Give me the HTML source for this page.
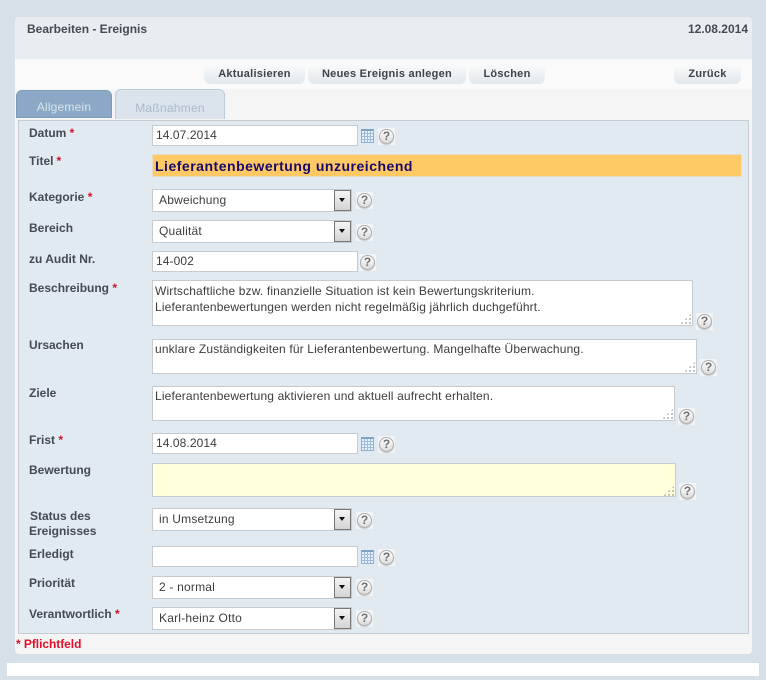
<!DOCTYPE html>
<html><head><meta charset="utf-8"><style>
html,body{margin:0;padding:0}
body{width:766px;height:680px;background:#d5e0e8;position:relative;overflow:hidden;font-family:"Liberation Sans",sans-serif;font-size:12px;color:#444}
div,span.a{position:absolute;box-sizing:border-box}
.l{left:29px;font-weight:bold;font-size:12px;line-height:14px;color:#454b52;white-space:nowrap}
.l b{color:#d2102a}
.i{left:152px;background:#fff;border:1px solid #c6cbd0;font-size:12px;letter-spacing:.08px;line-height:19px;padding-left:3px;color:#3c3c3c;white-space:nowrap}
.s{left:152px;width:200px;height:23px;background:#fff;border:1px solid #c6cbd0;font-size:12px;letter-spacing:.2px;line-height:21px;padding-left:6px;color:#3c3c3c}
.s i{position:absolute;box-sizing:border-box;right:0;top:0;width:17px;height:21px;background:linear-gradient(#f4f4f4,#d4d4d4);border:1px solid #777}
.s i:after{content:"";position:absolute;left:4px;top:7px;border:3.5px solid transparent;border-top:4px solid #111;border-bottom:0}
.h{width:17px;height:17px;background:#f2f5f8}
.h:after{content:"?";position:absolute;left:1px;top:1px;width:15px;height:15px;box-sizing:border-box;border:1px solid #adadad;border-radius:50%;background:linear-gradient(#fff,#dcdcdc);font:bold 12px/13px "Liberation Sans",sans-serif;color:#707070;text-align:center;box-shadow:0 1px 1px #c4c4c4}
.c{left:361px;width:13px;height:14px;background:repeating-linear-gradient(90deg,transparent 0 2px,#9dbcdb 2px 3px),repeating-linear-gradient(0deg,#e6eff7 0 2px,#9dbcdb 2px 3px);border:1px solid #8fb0d2;border-top:2px solid #7ea3c9}
.t{line-height:16px;padding:1px 2px;letter-spacing:.15px;white-space:pre;color:#3c3c3c}
.g{width:12px;height:11px;background-image:radial-gradient(circle,#bdbdbd 1px,transparent 1.2px);background-size:4px 4px;clip-path:polygon(100% 0,100% 100%,0 100%)}
.b{top:64px;height:20px;border-radius:6px;background:linear-gradient(#fafbfb,#e2e8ed);font-weight:bold;font-size:11px;letter-spacing:.27px;line-height:21px;text-align:center;color:#3f4448;white-space:nowrap}
</style></head><body>
<div style="left:15px;top:17px;width:737px;height:637px;background:#f5f5f5;border-radius:4px"></div>
<div style="left:15px;top:17px;width:737px;height:42px;background:#e8edf1;border-radius:4px 4px 0 0"></div>
<div style="left:15px;top:59px;width:737px;height:30px;background:#fafafa"></div>
<div style="left:27px;top:22px;font-weight:bold;line-height:14px;color:#444b52">Bearbeiten - Ereignis</div>
<div style="right:18px;top:22px;font-weight:bold;line-height:14px;color:#444b52">12.08.2014</div>
<div class="b" style="left:204px;width:101px">Aktualisieren</div>
<div class="b" style="left:308px;width:158px">Neues Ereignis anlegen</div>
<div class="b" style="left:469px;width:76px">Löschen</div>
<div class="b" style="left:674px;width:67px">Zurück</div>
<div style="left:16px;top:90px;width:96px;height:28px;background:#8ba9c6;border:1px solid #7d9cba;border-radius:6px 6px 0 0;color:#d8e3ec;text-align:center;line-height:33px;font-size:12px;letter-spacing:.2px">Allgemein</div>
<div style="left:115px;top:89px;width:110px;height:30px;background:#dbe4ec;border:1px solid #bcccda;border-bottom:0;border-radius:6px 6px 0 0;color:#a9b9c8;text-align:center;line-height:36px;font-size:12px;letter-spacing:.25px">Maßnahmen</div>
<div style="left:18px;top:120px;width:731px;height:514px;background:#e1e9f1;border:1px solid #c6ccd1"></div>

<div class="l" style="top:126px">Datum <b>*</b></div>
<div class="i" style="top:125px;width:206px;height:21px">14.07.2014</div>
<div class="c" style="top:129px"></div><div class="h" style="left:378px;top:128px"></div>

<div class="l" style="top:154px">Titel<b style="margin-left:3px">*</b></div>
<div style="left:152px;top:154px;width:590px;height:23px;background:#fec965;border:1px solid #e6dcc0;font-weight:bold;font-size:14px;letter-spacing:.51px;line-height:23px;padding-left:2px;color:#18086a">Lieferantenbewertung unzureichend</div>

<div class="l" style="top:190px">Kategorie <b>*</b></div>
<div class="s" style="top:189px">Abweichung<i></i></div><div class="h" style="left:356px;top:192px"></div>

<div class="l" style="top:221px">Bereich</div>
<div class="s" style="top:220px">Qualität<i></i></div><div class="h" style="left:356px;top:224px"></div>

<div class="l" style="top:252px">zu Audit Nr.</div>
<div class="i" style="top:251px;width:206px;height:21px">14-002</div><div class="h" style="left:359px;top:254px"></div>

<div class="l" style="top:281px">Beschreibung <b>*</b></div>
<div class="i t" style="top:280px;width:541px;height:46px;padding-top:2px">Wirtschaftliche bzw. finanzielle Situation ist kein Bewertungskriterium.
Lieferantenbewertungen werden nicht regelmäßig jährlich duchgeführt.</div>
<div class="g" style="left:680px;top:313px"></div><div class="h" style="left:696px;top:313px"></div>

<div class="l" style="top:338px">Ursachen</div>
<div class="i t" style="top:339px;width:545px;height:35px">unklare Zuständigkeiten für Lieferantenbewertung. Mangelhafte Überwachung.</div>
<div class="g" style="left:684px;top:361px"></div><div class="h" style="left:700px;top:359px"></div>

<div class="l" style="top:386px">Ziele</div>
<div class="i t" style="top:386px;width:523px;height:35px">Lieferantenbewertung aktivieren und aktuell aufrecht erhalten.</div>
<div class="g" style="left:662px;top:408px"></div><div class="h" style="left:678px;top:408px"></div>

<div class="l" style="top:433px">Frist <b>*</b></div>
<div class="i" style="top:433px;width:206px;height:21px">14.08.2014</div>
<div class="c" style="top:437px"></div><div class="h" style="left:378px;top:436px"></div>

<div class="l" style="top:463px">Bewertung</div>
<div class="i" style="top:463px;width:524px;height:34px;background:#ffffdc"></div>
<div class="g" style="left:663px;top:485px"></div><div class="h" style="left:679px;top:483px"></div>

<div class="l" style="top:509px;line-height:15px;left:30px">Status des<br><span style="margin-left:-1px">Ereignisses</span></div>
<div class="s" style="top:508px">in Umsetzung<i></i></div><div class="h" style="left:356px;top:512px"></div>

<div class="l" style="top:547px">Erledigt</div>
<div class="i" style="top:546px;width:206px;height:21px"></div>
<div class="c" style="top:550px"></div><div class="h" style="left:378px;top:549px"></div>

<div class="l" style="top:576px">Priorität</div>
<div class="s" style="top:576px">2 - normal<i></i></div><div class="h" style="left:356px;top:579px"></div>

<div class="l" style="top:607px">Verantwortlich <b>*</b></div>
<div class="s" style="top:607px">Karl-heinz Otto<i></i></div><div class="h" style="left:356px;top:610px"></div>

<div style="left:16px;top:637px;font-weight:bold;line-height:14px;letter-spacing:-.05px;color:#e0102a">* Pflichtfeld</div>
<div style="left:7px;top:663px;width:752px;height:13px;background:#fff"></div>
</body></html>
